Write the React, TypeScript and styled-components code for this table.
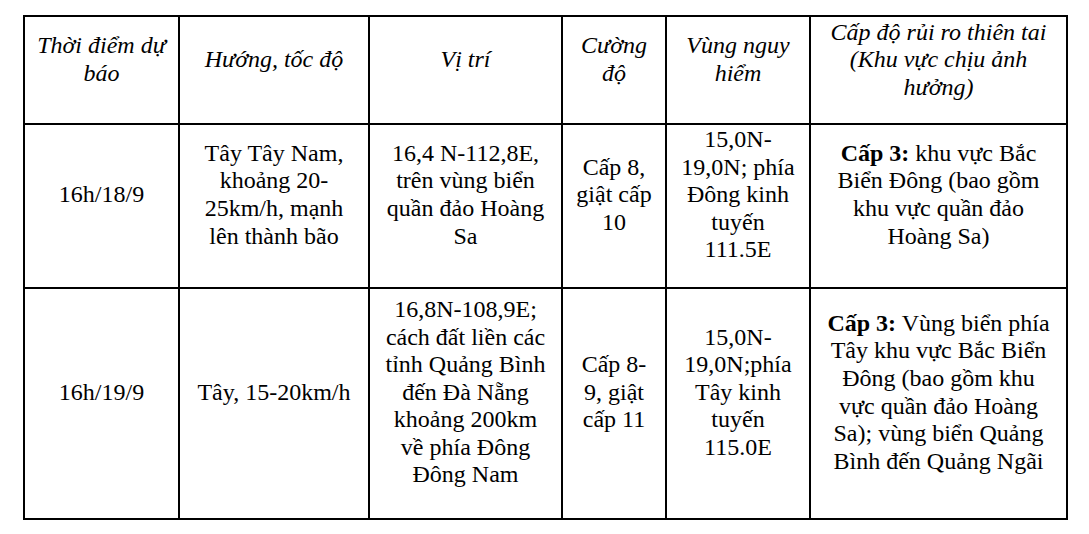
import React from "react";
import styled, { createGlobalStyle } from "styled-components";

const GlobalStyle = createGlobalStyle`
  html, body {
    margin: 0;
    padding: 0;
    background: #ffffff;
  }
`;

const Page = styled.div`
  padding: 15px 0 0 23px;
`;

const ForecastTable = styled.table`
  border-collapse: collapse;
  table-layout: fixed;
  width: 1043px;
  font-family: "Liberation Serif", "DejaVu Serif", serif;
  font-size: 24px;
  line-height: 27.6px;
  color: #000000;
`;

const Row = styled.tr<{ $height: number }>`
  height: ${({ $height }) => $height}px;
`;

const HeadCell = styled.th<{ $width: number }>`
  box-sizing: border-box;
  width: ${({ $width }) => $width}px;
  border: 2px solid #000000;
  padding: 0 2px 20px;
  font-family: "Liberation Serif", "DejaVu Serif", serif;
  font-weight: normal;
  font-style: italic;
  text-align: center;
  vertical-align: middle;
  white-space: nowrap;
`;

const Cell = styled.td`
  border: 2px solid #000000;
  padding: 0 2px 22px;
  font-family: "Liberation Serif", "DejaVu Serif", serif;
  text-align: center;
  vertical-align: middle;
  white-space: nowrap;
`;

const Level = styled.b`
  font-weight: bold;
`;

const lines = (text: string) =>
  text.split("\n").map((line, i, arr) => (
    <React.Fragment key={i}>
      {line}
      {i < arr.length - 1 && <br />}
    </React.Fragment>
  ));

const columns = [
  { width: 155, title: "Thời điểm dự\nbáo" },
  { width: 190, title: "Hướng, tốc độ" },
  { width: 193, title: "Vị trí" },
  { width: 104, title: "Cường\nđộ" },
  { width: 144, title: "Vùng nguy\nhiểm" },
  { width: 257, title: "Cấp độ rủi ro thiên tai\n(Khu vực chịu ảnh\nhưởng)" },
];

const rows = [
  {
    height: 164,
    time: "16h/18/9",
    direction: "Tây Tây Nam,\nkhoảng 20-\n25km/h, mạnh\nlên thành bão",
    position: "16,4 N-112,8E,\ntrên vùng biển\nquần đảo Hoàng\nSa",
    strength: "Cấp 8,\ngiật cấp\n10",
    danger: "15,0N-\n19,0N; phía\nĐông kinh\ntuyến\n111.5E",
    riskLead: " khu vực Bắc",
    risk: "Biển Đông (bao gồm\nkhu vực quần đảo\nHoàng Sa)",
  },
  {
    height: 231,
    time: "16h/19/9",
    direction: "Tây, 15-20km/h",
    position:
      "16,8N-108,9E;\ncách đất liền các\ntỉnh Quảng Bình\nđến Đà Nẵng\nkhoảng 200km\nvề phía Đông\nĐông Nam",
    strength: "Cấp 8-\n9, giật\ncấp 11",
    danger: "15,0N-\n19,0N;phía\nTây kinh\ntuyến\n115.0E",
    riskLead: " Vùng biển phía",
    risk: "Tây khu vực Bắc Biển\nĐông (bao gồm khu\nvực quần đảo Hoàng\nSa); vùng biển Quảng\nBình đến Quảng Ngãi",
  },
];

const App: React.FC = () => {
  return (
    <>
      <GlobalStyle />
      <Page>
        <ForecastTable>
          <thead>
            <Row $height={108}>
              {columns.map((col) => (
                <HeadCell key={col.title} $width={col.width}>
                  {lines(col.title)}
                </HeadCell>
              ))}
            </Row>
          </thead>
          <tbody>
            {rows.map((row) => (
              <Row key={row.time} $height={row.height}>
                <Cell>{row.time}</Cell>
                <Cell>{lines(row.direction)}</Cell>
                <Cell>{lines(row.position)}</Cell>
                <Cell>{lines(row.strength)}</Cell>
                <Cell>{lines(row.danger)}</Cell>
                <Cell>
                  <Level>Cấp 3:</Level>
                  {row.riskLead}
                  <br />
                  {lines(row.risk)}
                </Cell>
              </Row>
            ))}
          </tbody>
        </ForecastTable>
      </Page>
    </>
  );
};

export default App;
